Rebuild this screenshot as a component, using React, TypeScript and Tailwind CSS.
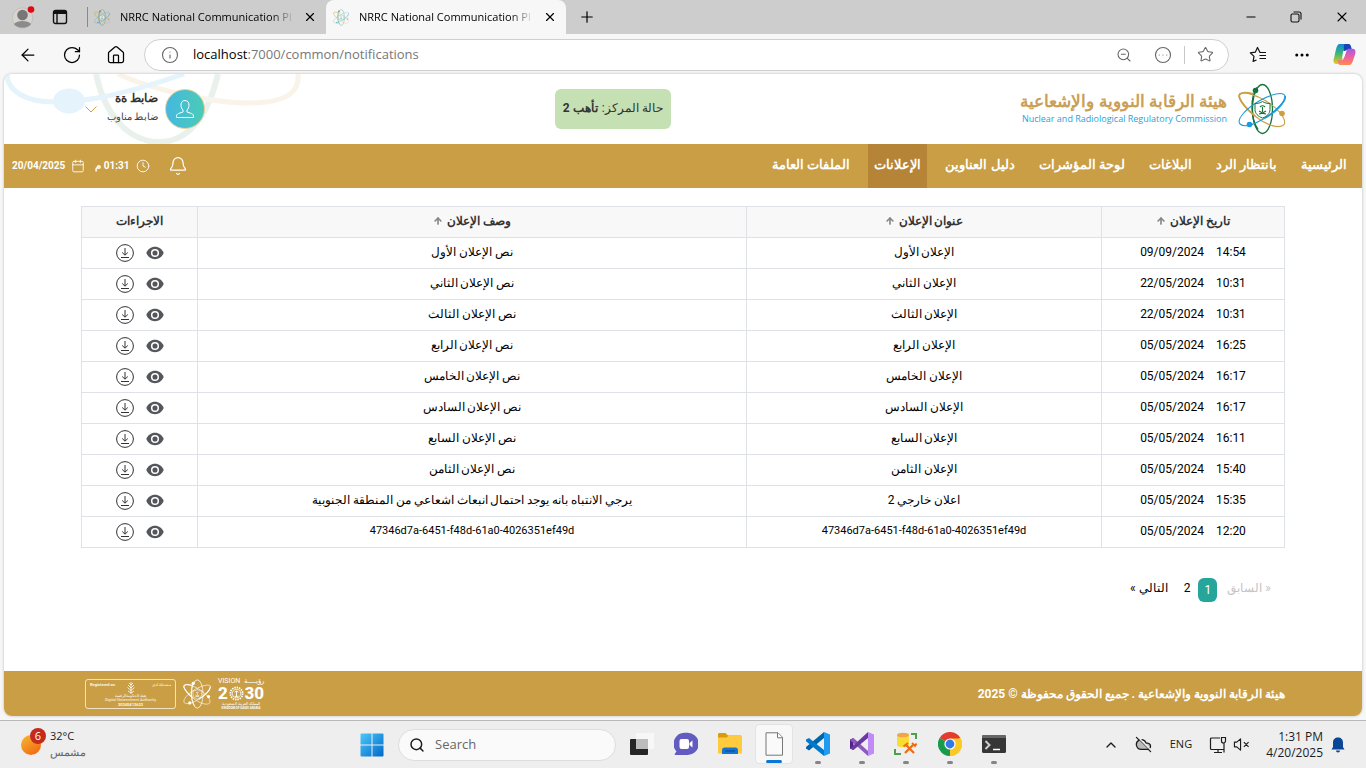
import React from "react";
import {
  ArrowLeft,
  ArrowUp,
  Bell,
  Calendar,
  ChevronUp,
  CircleEllipsis,
  Clock4,
  CloudOff,
  Ellipsis,
  House,
  Info,
  Minus,
  Plus,
  RotateCw,
  Search,
  Star,
  X,
  ZoomOut,
} from "lucide-react";

type IconProps = { className?: string };

const navItems = [
  "الرئيسية",
  "بانتظار الرد",
  "البلاغات",
  "لوحة المؤشرات",
  "دليل العناوين",
  "الإعلانات",
  "الملفات العامة",
];
const activeNav = "الإعلانات";

const guid = "47346d7a-6451-f48d-61a0-4026351ef49d";

const rows = [
  { date: "09/09/2024", time: "14:54", title: "الإعلان الأول", text: "نص الإعلان الأول" },
  { date: "22/05/2024", time: "10:31", title: "الإعلان الثاني", text: "نص الإعلان الثاني" },
  { date: "22/05/2024", time: "10:31", title: "الإعلان الثالث", text: "نص الإعلان الثالث" },
  { date: "05/05/2024", time: "16:25", title: "الإعلان الرابع", text: "نص الإعلان الرابع" },
  { date: "05/05/2024", time: "16:17", title: "الإعلان الخامس", text: "نص الإعلان الخامس" },
  { date: "05/05/2024", time: "16:17", title: "الإعلان السادس", text: "نص الإعلان السادس" },
  { date: "05/05/2024", time: "16:11", title: "الإعلان السابع", text: "نص الإعلان السابع" },
  { date: "05/05/2024", time: "15:40", title: "الإعلان الثامن", text: "نص الإعلان الثامن" },
  {
    date: "05/05/2024",
    time: "15:35",
    title: "اعلان خارجي 2",
    text: "يرجي الانتباه بانه يوجد احتمال انبعاث اشعاعي من المنطقة الجنوبية",
  },
  { date: "05/05/2024", time: "12:20", title: guid, text: guid },
];

function Atom({ className, mono = false }: IconProps & { mono?: boolean }) {
  const green = mono ? "#fff" : "#12753f";
  const gold = mono ? "#fff" : "#cb9f45";
  const blue = mono ? "#fff" : "#1f9ad9";
  return (
    <svg viewBox="0 0 48 52" className={className} fill="none" aria-hidden="true">
      <ellipse cx="24.500" cy="26" rx="10" ry="24.500" stroke={green} strokeWidth="1.300" />
      <path d="M19 4.500C12 14 12.500 36 20 46.500" stroke={green} strokeWidth="1.400" />
      <path d="M46.500 41C42 47 28 42 17 33S-1.500 14 2 11c4-3 16 1 26 7s20 16 18.500 23Z" stroke={gold} strokeWidth="1.100" />
      <path d="M17 33C6 24-1 14 2 11c3-2.500 8-1.500 13 0" stroke={gold} strokeWidth="1.900" />
      <path d="M2 41c-4-5 7-16 19-23s25-10 26-5-8 15-20 22S7 45 2 41Z" stroke={blue} strokeWidth="1.100" />
      <path d="M47 13c1 5-8 15-20 22" stroke={blue} strokeWidth="1.900" />
      <circle cx="17.500" cy="7.500" r="2.800" fill={green} />
      <circle cx="44" cy="30.500" r="2.800" fill={gold} />
      <circle cx="11.500" cy="41.500" r="2.800" fill={blue} />
      <path
        d="M24.500 18.500c2 1.500 5 2 7.500 2v6c0 4-3 7-7.500 8.500-4.500-1.500-7.500-4.500-7.500-8.500v-6c2.500 0 5.500-.5 7.500-2Z"
        fill={mono ? "none" : "#fff"}
        stroke={green}
      />
      <path d="M24.500 24v5M22 24q2.500-2.500 5 0M21 31q3.500-.5 7-3M28 31q-3.500-.5-7-3" stroke={green} strokeWidth="1.100" />
    </svg>
  );
}

function HeaderDecoration() {
  return (
    <svg
      viewBox="0 0 300 70"
      className="pointer-events-none absolute top-0 left-0 h-[70px] w-[300px]"
      fill="none"
      aria-hidden="true"
    >
      <path d="M92 0C100 38 122 67 154 68S205 38 214 0" stroke="#e9f1ec" strokeWidth="6" />
      <path d="M114 0c30 14 90 29 130 29 34 0 52-8 50-29" stroke="#faf3e9" strokeWidth="5" />
      <path d="M3 0C3 18 24 28 50 28S110 24 180 0" stroke="#e5f3fd" strokeWidth="5" />
      <ellipse cx="65" cy="27" rx="16" ry="12.500" fill="#e5f3fd" />
    </svg>
  );
}

function EyeIcon() {
  return (
    <svg viewBox="0 0 18 14" className="h-3.5 w-[18px]" aria-hidden="true">
      <path d="M9 .8C5 .8 1.800 3.300.3 7c1.500 3.700 4.700 6.200 8.700 6.200s7.200-2.500 8.700-6.200C16.200 3.300 13 .8 9 .8Z" fill="#55565b" />
      <circle cx="9" cy="7" r="3.300" fill="#55565b" stroke="#fff" strokeWidth="1.500" />
    </svg>
  );
}

function DownloadIcon() {
  return (
    <svg viewBox="0 0 18 18" className="size-[18px]" fill="none" stroke="#333" aria-hidden="true">
      <circle cx="9" cy="9" r="8.400" />
      <path d="M9 4v7M6.200 8.500 9 11.200l2.800-2.700M5 13.500h8" />
    </svg>
  );
}

function TabItem({ active }: { active?: boolean }) {
  return (
    <div
      className={
        active
          ? "flex w-60 items-center rounded-t-lg bg-[#f7f7f7] pr-2 pl-[7px]"
          : "flex w-[238px] items-center pr-2 pl-1.5"
      }
    >
      <Atom className="h-[17px] w-4 shrink-0 opacity-60" />
      <span className="mr-auto ml-2.5 bg-gradient-to-r from-black from-88% to-black/10 to-100% bg-clip-text text-[11px] whitespace-nowrap text-transparent">
        NRRC National Communication Pl
      </span>
      <button type="button" aria-label="Close tab" className="flex size-4 items-center justify-center">
        <X className="size-3.5" strokeWidth={2} />
      </button>
    </div>
  );
}

function BrowserBar() {
  return (
    <header>
      <div className="flex h-[34px] bg-[#cdcdcd]">
        <div className="flex w-[88px] items-center gap-4 bg-clip-padding pl-3">
          <button type="button" aria-label="Profile">
            <svg viewBox="0 0 24 24" className="size-6" aria-hidden="true">
              <circle cx="10.500" cy="13" r="10.200" fill="#d8d4d0" stroke="#c3c0bc" />
              <circle cx="10.500" cy="10" r="5.300" fill="#777" />
              <path d="M2 19c3-4 14-4 17 0-3 5-14 5-17 0Z" fill="#8b8b8b" />
              <circle cx="19" cy="4.500" r="3.300" fill="#e30613" />
            </svg>
          </button>
          <button type="button" aria-label="Tab actions">
            <svg viewBox="0 0 16 16" className="size-4" fill="none" stroke="#111" strokeWidth="1.400" aria-hidden="true">
              <rect x="1.500" y="1.500" width="13" height="13" rx="2" />
              <path d="M1.500 3.500h13" strokeWidth="3" />
              <path d="M5 4v10.500" />
            </svg>
          </button>
          <span className="ml-auto h-5 w-px bg-[#888]" />
        </div>
        <TabItem />
        <TabItem active />
        <button type="button" aria-label="New tab" className="ml-3 flex items-center">
          <Plus className="size-[18px]" strokeWidth={1.6} />
        </button>
        <div className="ml-auto flex items-center gap-8 pr-4">
          <button type="button" aria-label="Minimize"><Minus className="size-3.5" strokeWidth={1.7} /></button>
          <button type="button" aria-label="Restore">
            <svg viewBox="0 0 12 12" className="size-3" fill="none" stroke="#111" strokeWidth="1.100" aria-hidden="true">
              <rect x="1" y="3" width="8" height="8" rx="1.500" />
              <path d="M3.500 1H9a2 2 0 0 1 2 2v5.500" />
            </svg>
          </button>
          <button type="button" aria-label="Close"><X className="size-4" strokeWidth={1.6} /></button>
        </div>
      </div>
      <div className="flex h-10 items-center bg-[#f7f7f7] pt-px pr-2.5 pl-[18px]">
        <button type="button" aria-label="Back"><ArrowLeft className="size-5" strokeWidth={1.5} /></button>
        <button type="button" aria-label="Refresh" className="ml-6"><RotateCw className="size-5" strokeWidth={1.5} /></button>
        <button type="button" aria-label="Home" className="ml-6"><House className="size-5" strokeWidth={1.5} /></button>
        <div className="ml-[18px] flex h-8 min-w-0 flex-1 items-center rounded-full border border-[#cfcfcf] bg-white pr-3.5 pl-4">
          <Info className="size-[18px] shrink-0 text-[#666]" strokeWidth={1.5} />
          <span className="ml-3.5 text-[13px] text-[#777]">
            <span className="text-black">localhost</span>:7000/common/notifications
          </span>
          <div className="ml-auto flex items-center text-[#666]">
            <button type="button" aria-label="Zoom out"><ZoomOut className="size-4" strokeWidth={1.6} /></button>
            <button type="button" aria-label="Site options" className="ml-[22px]"><CircleEllipsis className="size-[18px]" strokeWidth={1.5} /></button>
            <span className="mx-3 h-[18px] w-px bg-[#c8c8c8]" />
            <button type="button" aria-label="Add to favorites"><Star className="size-[17px]" strokeWidth={1.5} /></button>
          </div>
        </div>
        <button type="button" aria-label="Favorites" className="ml-5">
          <svg viewBox="0 0 18 18" className="size-[18px]" fill="none" stroke="#111" strokeWidth="1.200" strokeLinejoin="round" aria-hidden="true">
            <path d="M16 6.500h-5L8.500 1.500 6.300 6.200l-5 .7 3.700 3.500-.9 5L7.500 14M10.500 9.500H17M10.500 12.500H17M10.500 6.500H17" />
          </svg>
        </button>
        <button type="button" aria-label="Settings and more" className="ml-[26px]"><Ellipsis className="size-[18px]" strokeWidth={2} /></button>
        <button type="button" aria-label="Copilot" className="ml-[22px]">
          <svg viewBox="0 0 24 24" className="size-[23px]" aria-hidden="true">
            <defs>
              <linearGradient id="copilotA" x1="0" y1="0" x2="0" y2="1">
                <stop offset="0" stopColor="#1587d8" />
                <stop offset=".45" stopColor="#35b778" />
                <stop offset="1" stopColor="#f3c71b" />
              </linearGradient>
              <linearGradient id="copilotB" x1="0" y1="0" x2="0" y2="1">
                <stop offset="0" stopColor="#a25be8" />
                <stop offset=".5" stopColor="#ee5fa5" />
                <stop offset="1" stopColor="#ff8b4b" />
              </linearGradient>
            </defs>
            <path d="M7 1h9c1.800 0 2.300 1.500 2.800 3l.7 3h-4c-2 0-3 1-3.500 3l-3 9c-.5 2-1.500 3-3 3H3.500c-3 0-3.500-3-2.500-6l2-9C4 3 5 1 7 1Z" fill="url(#copilotA)" />
            <path d="M12 1h4c1.800 0 2.300 1.500 2.800 3l.7 3h-4c-2 0-3 .8-3.500 2-1-3-1-6 0-8Z" fill="#1745b8" />
            <path d="M17 23H8c-1.800 0-2.300-1.500-2.800-3l-.4-2H8c2 0 3-1 3.500-3l2.500-7c.5-1.500 1.500-2 3-2h3.500c3 0 3.500 3 2.500 6l-2 6c-1 3-2 5-4 5Z" fill="url(#copilotB)" />
            <path d="m10.500 8.500 3.500-.5-2.500 7-2 1Z" fill="#fff" />
          </svg>
        </button>
      </div>
    </header>
  );
}

function SiteHeader() {
  return (
    <div className="relative flex h-[70px] items-center justify-between pr-[76px] pl-[81px]">
      <HeaderDecoration />
      <a href="#home" className="relative flex items-center gap-[11px]">
        <Atom className="h-[52px] w-12" />
        <span className="flex flex-col items-start pb-1">
          <span className="text-[17px] leading-6 font-bold whitespace-nowrap text-[#cb9f55]">هيئة الرقابة النووية والإشعاعية</span>
          <span dir="ltr" className="font-['Open_Sans','Noto_Sans',sans-serif] text-[9px] leading-3 font-medium whitespace-nowrap text-[#2b9fd9]">
            Nuclear and Radiological Regulatory Commission
          </span>
        </span>
      </a>
      <p className="relative flex h-10 w-[116px] items-center justify-center gap-1 rounded-md bg-[#c5e0b3] pb-0.5 text-xs whitespace-nowrap text-[#333]">
        حالة المركز: <b>تأهب 2</b>
      </p>
      <button type="button" className="relative flex items-center gap-[7px]">
        <span className="flex size-10 items-center justify-center rounded-full border border-[#e5cf9e] bg-linear-to-r from-[#45b8e0] to-[#4bcbb5]">
          <svg viewBox="0 0 20 20" className="size-5" fill="none" stroke="#fff" aria-hidden="true">
            <path d="M10 1.500c-2.800 0-4 2-4 4.500 0 2.200.8 4 2 5v2l-4.500 1.500c-1.300.5-2 1.500-2 3v1h17v-1c0-1.500-.7-2.500-2-3L12 13v-2c1.200-1 2-2.800 2-5 0-2.500-1.200-4.500-4-4.500Z" />
          </svg>
        </span>
        <span className="flex w-[52px] flex-col items-start pb-1 text-[#333]">
          <b className="text-xs leading-5 whitespace-nowrap">ضابط ةة</b>
          <span className="text-[10px] leading-[18px] whitespace-nowrap text-[#444]">ضابط مناوب</span>
        </span>
        <svg viewBox="0 0 12 7" className="mr-0.5 h-[7px] w-3" fill="none" stroke="#cb9f45" aria-hidden="true">
          <path d="m.5.5 5.500 5.500L11.500.5" />
        </svg>
      </button>
    </div>
  );
}

function NavBar() {
  return (
    <nav className="flex h-11 items-center justify-between bg-[#c99e45] pr-[9px] pl-2 text-white">
      <ul className="flex h-full gap-3">
        {navItems.map((item) => (
          <li key={item} className={item === activeNav ? "bg-[#b68436]" : undefined}>
            <a href="#nav" className="flex h-full items-center px-1.5 pb-0.5 text-[13px] font-bold whitespace-nowrap">
              {item}
            </a>
          </li>
        ))}
      </ul>
      <div className="flex items-center text-[10px] font-bold">
        <button type="button" aria-label="التنبيهات"><Bell className="size-5" strokeWidth={1.5} /></button>
        <Clock4 className="mr-[18px] size-3.5" strokeWidth={1.5} />
        <span className="mr-1.5 pb-0.5">01:31 م</span>
        <Calendar className="mr-2.5 size-3.5" strokeWidth={1.5} />
        <span className="mr-1.5 pb-0.5">20/04/2025</span>
      </div>
    </nav>
  );
}

function SortableHeading({ label }: { label: string }) {
  return (
    <button type="button" className="inline-flex items-center gap-1 font-bold">
      {label}
      <ArrowUp className="size-2.5 text-[#888]" strokeWidth={4} />
    </button>
  );
}

function NotificationsTable() {
  return (
    <table className="w-full table-fixed border-collapse text-center text-xs text-black [&_td]:h-[31px] [&_td]:border [&_td]:border-[#dee2e6] [&_td]:pb-0.5 [&_th]:h-[31px] [&_th]:border [&_th]:border-[#dee2e6] [&_th]:pb-0.5">
      <thead className="bg-[#f8f8f8] text-[#333]">
        <tr>
          <th className="w-[183px]"><SortableHeading label="تاريخ الإعلان" /></th>
          <th className="w-[355px]"><SortableHeading label="عنوان الإعلان" /></th>
          <th><SortableHeading label="وصف الإعلان" /></th>
          <th className="w-[116px]">الاجراءات</th>
        </tr>
      </thead>
      <tbody>
        {rows.map((row, i) => (
          <tr key={i}>
            <td>
              <span dir="ltr" className="inline-flex gap-3">
                <span>{row.date}</span>
                <span>{row.time}</span>
              </span>
            </td>
            <td className={row.title === guid ? "text-[11px]" : undefined}>{row.title}</td>
            <td className={row.text === guid ? "text-[11px]" : undefined}>{row.text}</td>
            <td>
              <span className="flex items-center justify-center gap-3 pt-0.5">
                <button type="button" aria-label="عرض"><EyeIcon /></button>
                <button type="button" aria-label="تنزيل"><DownloadIcon /></button>
              </span>
            </td>
          </tr>
        ))}
      </tbody>
    </table>
  );
}

function Pagination() {
  return (
    <nav aria-label="الصفحات" className="mt-7 flex items-center pr-3.5 text-xs leading-6 text-black">
      <button type="button" disabled className="pb-1 text-[#c4c4c4]">« السابق</button>
      <button type="button" aria-current="page" className="mr-2.5 h-6 w-[19px] rounded-md bg-[#26a69a] leading-5 text-white">1</button>
      <button type="button" className="mr-2 pb-1">2</button>
      <button type="button" className="mr-4 pb-1">التالي »</button>
    </nav>
  );
}

function RegistrationBadge() {
  return (
    <div className="flex h-[30px] w-[91px] flex-col rounded-[3px] border border-white/70 px-1 pt-0.5 text-[4px] leading-[5px] text-white/90">
      <div className="flex items-start justify-between whitespace-nowrap">
        <span className="w-8 text-right">مسجلة لدى</span>
        <svg viewBox="0 0 10 12" className="h-3 w-2.5" stroke="#fff" strokeWidth=".8" fill="none" aria-hidden="true">
          <path d="M5 0v12M2 3l3 3 3-3M1.500 5.500l3.500 3 3.500-3M3 1l2 2 2-2M2 9l3 2 3-2" />
        </svg>
        <span dir="ltr" className="w-8 font-bold">Registered on</span>
      </div>
      <span className="text-center leading-[4px]">هيئة الحكومة الرقمية</span>
      <span dir="ltr" className="text-center leading-[4px]">Digital Government Authority</span>
      <span className="text-center leading-[6px] font-bold">20240412632</span>
    </div>
  );
}

function VisionLogo() {
  return (
    <div dir="ltr" className="flex w-[46px] flex-col text-white">
      <div className="flex justify-between text-[7px] leading-2">
        <span>VISION</span>
        <span dir="rtl">رؤيــــة</span>
      </div>
      <div className="flex h-4 items-center justify-between text-[17px] leading-4 font-extrabold">
        <span>2</span>
        <svg viewBox="0 0 16 16" className="size-[15px]" fill="none" stroke="#fff" aria-hidden="true">
          <circle cx="8" cy="8" r="6.500" strokeWidth="2" strokeDasharray="1.500 1" />
          <circle cx="8" cy="8" r="4.500" strokeWidth=".8" />
          <path d="M8 5v6M6 6.500q2-2 4 0M6 11h4" />
        </svg>
        <span>30</span>
      </div>
      <span dir="rtl" className="text-center text-[4px] leading-[5px] whitespace-nowrap">المملكة العربية السعودية</span>
      <span className="text-center text-[3px] leading-[4px] font-bold whitespace-nowrap">KINGDOM OF SAUDI ARABIA</span>
    </div>
  );
}

function SiteFooter() {
  return (
    <footer className="flex h-[45px] items-center justify-between bg-[#c99e45] pr-[77px] pl-[81px] text-white">
      <p className="text-xs font-bold">هيئة الرقابة النووية والإشعاعية . جميع الحقوق محفوظة © 2025</p>
      <div className="flex items-center gap-[7px]">
        <VisionLogo />
        <Atom mono className="h-[30px] w-7" />
        <RegistrationBadge />
      </div>
    </footer>
  );
}

function WindowsLogo() {
  return (
    <svg viewBox="0 0 24 24" className="size-6" aria-hidden="true">
      <defs>
        <linearGradient id="win" x1="0" y1="0" x2="1" y2="1">
          <stop offset="0" stopColor="#4cc8fb" />
          <stop offset="1" stopColor="#0068c9" />
        </linearGradient>
      </defs>
      <path d="M.5 1.500a1 1 0 0 1 1-1h10v11H.5ZM12.500.5h10a1 1 0 0 1 1 1v10h-11ZM.5 12.500h11v11h-10a1 1 0 0 1-1-1ZM12.500 12.500h11v10a1 1 0 0 1-1 1h-10Z" fill="url(#win)" />
    </svg>
  );
}

const taskApps: { name: string; running?: boolean; active?: boolean; art: React.ReactNode }[] = [
  {
    name: "Task view",
    art: (
      <>
        <rect y="7" width="18" height="16" rx="1" fill="#252525" />
        <rect x="6" y="1" width="18" height="16" rx="1" fill="#f7f7f7" />
        <path d="M6 7h12v10H7a1 1 0 0 1-1-1Z" fill="#bcbcbc" />
      </>
    ),
  },
  {
    name: "Chat",
    art: (
      <>
        <path d="M12 .8A11.200 11.200 0 1 1 12 23H1.500c-1 0-1-1-.5-1.500l1.500-2A11.200 11.200 0 0 1 12 .8Z" fill="#625bc0" />
        <rect x="5.500" y="7" width="9.500" height="10" rx="2" fill="#fff" />
        <path d="m15.500 11 3-2.500v7l-3-2.500Z" fill="#fff" />
      </>
    ),
  },
  {
    name: "File Explorer",
    art: (
      <>
        <path d="M0 2.500c0-1 .5-1.500 1.500-1.500h6L10 3.500h12c1 0 2 .5 2 1.500v4H0Z" fill="#d99b09" />
        <path d="M0 5.500h8.500L11 3.500h11c1.500 0 2 .5 2 2v16H0Z" fill="#fecb3e" />
        <path d="M4 22v-4c0-1.500 1-2.500 2.500-2.500h11c1.500 0 2.500 1 2.500 2.500v4Z" fill="#1474cf" />
        <path d="M7 19h10" stroke="#0a4e99" strokeWidth="1.200" />
      </>
    ),
  },
  {
    name: "Document",
    active: true,
    art: (
      <>
        <path d="M4 .8h12l4.500 4.500v17.900H4Z" fill="#fafafa" stroke="#777" />
        <path d="M15.500.8v5h5" fill="#fff" stroke="#777" />
      </>
    ),
  },
  {
    name: "Visual Studio Code",
    running: true,
    art: (
      <>
        <path d="M18 0v6L3 18.500 0 16.500v-1.500Z" fill="#0065a9" />
        <path d="M18 24v-6L3 6 0 7.500v1.700Z" fill="#007acc" />
        <path d="m18 0 6 2.500v19L18 24Z" fill="#1f9cf0" />
      </>
    ),
  },
  {
    name: "Visual Studio",
    running: true,
    art: (
      <>
        <path d="M0 7.500 3.500 6v12L0 16.500Z" fill="#52218a" />
        <path d="M3.500 6 18 19v5L0 8Z" fill="#8c5bbb" />
        <path d="M18 0v6L3.500 18 0 16.500Z" fill="#6a3aa3" />
        <path d="m18 0 6 2.500v19L18 24Z" fill="#c18bf5" />
      </>
    ),
  },
  {
    name: "SQL Server tools",
    running: true,
    art: (
      <>
        <path d="M3 3v10.500c0 2 12 2 12 0V3Z" fill="#fbdc35" />
        <ellipse cx="9" cy="3" rx="6" ry="2.300" fill="#f0a54c" />
        <path d="M17 2h5v5M1 17v5h6" fill="none" stroke="#4da14e" strokeWidth="2" />
        <path d="m11 21 8-8M12 13l8 8" stroke="#ee6a12" strokeWidth="2.200" />
        <path d="M9.500 14.500 14 11M18 11l3 3 1.500-2.500" fill="none" stroke="#ee6a12" strokeWidth="1.800" />
      </>
    ),
  },
  {
    name: "Chrome",
    running: true,
    art: (
      <>
        <path d="M12 12 1.600 6A12 12 0 0 1 22.400 6Z" fill="#e33b2e" />
        <path d="M12 12 22.400 6A12 12 0 0 1 12 24Z" fill="#fcc924" />
        <path d="M12 12v12A12 12 0 0 1 1.600 6Z" fill="#1a9a4b" />
        <path d="M12 6.500h10.700A12 12 0 0 1 12 24l5-9Z" fill="#fcc924" />
        <circle cx="12" cy="12" r="5.600" fill="#fff" />
        <circle cx="12" cy="12" r="4.400" fill="#3379e8" />
      </>
    ),
  },
  {
    name: "Terminal",
    running: true,
    art: (
      <>
        <rect y="3" width="24" height="18" rx="1.500" fill="#363636" />
        <path d="M0 6V4.500A1.500 1.500 0 0 1 1.500 3h21A1.500 1.500 0 0 1 24 4.500V6Z" fill="#666" />
        <path d="m3.500 9 4 4-4 4" fill="none" stroke="#ccc" strokeWidth="2" />
        <path d="M11 17.500h7" stroke="#fff" strokeWidth="1.500" />
      </>
    ),
  },
];

function Taskbar() {
  return (
    <footer className="grid h-12 grid-cols-[1fr_auto_1fr] items-center border-t border-[#b9b9b9] bg-[#eeeeee] text-xs text-[#1c1c1c]">
      <button type="button" className="flex items-center gap-1 pb-0.5 pl-5 text-left text-[11px]">
        <svg viewBox="0 0 26 28" className="mb-1 h-7 w-[26px]" aria-hidden="true">
          <defs>
            <linearGradient id="sun" x1="0" y1="0" x2=".7" y2="1">
              <stop offset="0" stopColor="#f6b932" />
              <stop offset="1" stopColor="#f26b13" />
            </linearGradient>
          </defs>
          <circle cx="11" cy="17" r="10" fill="url(#sun)" />
          <circle cx="18" cy="8" r="8" fill="#c42b1c" />
          <text x="18" y="12" textAnchor="middle" fontSize="11" fill="#fff">6</text>
        </svg>
        <span className="flex flex-col items-start">
          <span className="leading-4">32°C</span>
          <span className="leading-4 text-[#666]">مشمس</span>
        </span>
      </button>
      <div className="flex items-center">
        <button type="button" aria-label="Start" className="flex w-11 justify-center"><WindowsLogo /></button>
        <label className="mx-1 flex h-8 w-[218px] items-center gap-2.5 rounded-full border border-[#ddd] bg-[#fafafa] px-2.5">
          <Search className="size-4 shrink-0" strokeWidth={2.2} />
          <input type="text" aria-label="Search" placeholder="Search" className="w-full bg-transparent text-[13px] outline-none placeholder:text-[#666]" />
        </label>
        {taskApps.map((app) => (
          <button
            key={app.name}
            type="button"
            aria-label={app.name}
            className="flex h-11 w-11 flex-col items-center px-[3px] pt-px pb-0.5"
          >
            <span
              className={
                app.active
                  ? "flex h-10 w-[38px] flex-col items-center justify-between rounded-sm border border-[#e3e3e3] bg-[#f8f8f8] pt-[7px]"
                  : "flex h-10 w-[38px] flex-col items-center justify-between pt-2"
              }
            >
              <svg viewBox="0 0 24 24" className="size-6" aria-hidden="true">{app.art}</svg>
              {app.active && <span className="h-[3px] w-4 rounded-full bg-[#0a76d8]" />}
              {app.running && <span className="h-[3px] w-1.5 rounded-full bg-[#858585]" />}
            </span>
          </button>
        ))}
      </div>
      <div className="flex items-center justify-end pr-[21px]">
        <button type="button" aria-label="Show hidden icons"><ChevronUp className="size-4" strokeWidth={2} /></button>
        <CloudOff className="ml-4 size-[17px] fill-[#bbb]" strokeWidth={1.8} />
        <span className="ml-[18px] text-[11px]">ENG</span>
        <svg viewBox="0 0 18 18" className="ml-[17px] size-[18px]" fill="none" stroke="#1c1c1c" strokeWidth="1.200" aria-hidden="true">
          <path d="M11 2H2.500a1 1 0 0 0-1 1v9.500a1 1 0 0 0 1 1H15M5 16.500h8M9 13.500v3M15 7v9.500M12.500 1.500h4V5a2 2 0 0 1-4 0Z" />
        </svg>
        <svg viewBox="0 0 18 18" className="ml-1.5 size-[17px]" fill="none" stroke="#1c1c1c" strokeWidth="1.200" aria-hidden="true">
          <path d="M1.500 6.500H4l4-3.500v12l-4-3.500H1.500ZM11.500 6.500l5 5M16.500 6.500l-5 5" strokeLinejoin="round" />
        </svg>
        <span className="ml-4 flex flex-col items-end leading-4">
          <span>1:31 PM</span>
          <span>4/20/2025</span>
        </span>
        <svg viewBox="0 0 14 16" className="ml-2 h-4 w-3.5" fill="#0b4696" aria-hidden="true">
          <path d="M7 .5c-3 0-5 2-5 5V10l-1.500 2.500h13L12 10V5.500c0-3-2-5-5-5ZM5 13.500h4a2 2 0 0 1-4 0Z" />
        </svg>
      </div>
    </footer>
  );
}

export default function App() {
  return (
    <div className="flex min-h-screen flex-col bg-[#f7f7f7] font-['Open_Sans','Noto_Sans',sans-serif] text-black">
      <BrowserBar />
      <div dir="rtl" className="mx-1 mb-1 flex flex-1 flex-col overflow-hidden rounded-lg bg-white font-[Roboto,sans-serif] shadow-[0_0_3px_rgba(0,0,0,0.25)]">
        <SiteHeader />
        <NavBar />
        <main className="flex-1 px-[77px] pt-[18px] pb-16">
          <NotificationsTable />
          <Pagination />
        </main>
        <SiteFooter />
      </div>
      <Taskbar />
    </div>
  );
}
